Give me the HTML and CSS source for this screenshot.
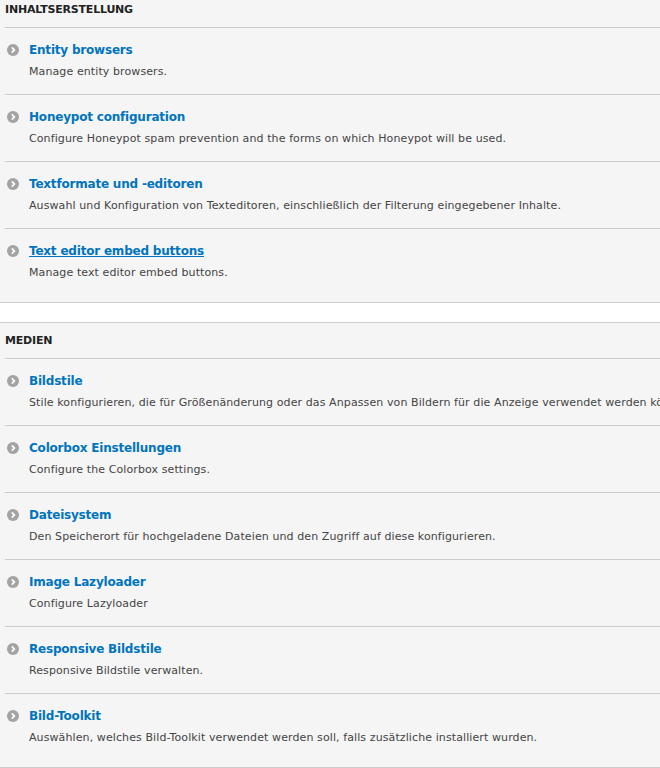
FILE: index.html
```html
<!DOCTYPE html>
<html lang="de">
<head>
<meta charset="utf-8">
<title>Konfiguration</title>
<link rel="stylesheet" href="styles.css">
</head>
<body>
<div class="page">
  <section class="panel first">
    <h3 class="panel-title">INHALTSERSTELLUNG</h3>
    <ul class="admin-list">
      <li>
        <div class="item-head"><svg class="icon" viewBox="0 0 12 12"><circle cx="6" cy="6" r="6" fill="#a3a3a3"/><path d="M4.8 3.4 7.3 6 4.8 8.6" fill="none" stroke="#fff" stroke-width="1.8"/></svg><a href="#" class="item-title">Entity browsers</a></div>
        <div class="desc">Manage entity browsers.</div>
      </li>
      <li>
        <div class="item-head"><svg class="icon" viewBox="0 0 12 12"><circle cx="6" cy="6" r="6" fill="#a3a3a3"/><path d="M4.8 3.4 7.3 6 4.8 8.6" fill="none" stroke="#fff" stroke-width="1.8"/></svg><a href="#" class="item-title">Honeypot configuration</a></div>
        <div class="desc">Configure Honeypot spam prevention and the forms on which Honeypot will be used.</div>
      </li>
      <li>
        <div class="item-head"><svg class="icon" viewBox="0 0 12 12"><circle cx="6" cy="6" r="6" fill="#a3a3a3"/><path d="M4.8 3.4 7.3 6 4.8 8.6" fill="none" stroke="#fff" stroke-width="1.8"/></svg><a href="#" class="item-title">Textformate und -editoren</a></div>
        <div class="desc">Auswahl und Konfiguration von Texteditoren, einschließlich der Filterung eingegebener Inhalte.</div>
      </li>
      <li>
        <div class="item-head"><svg class="icon" viewBox="0 0 12 12"><circle cx="6" cy="6" r="6" fill="#a3a3a3"/><path d="M4.8 3.4 7.3 6 4.8 8.6" fill="none" stroke="#fff" stroke-width="1.8"/></svg><a href="#" class="item-title hover">Text editor embed buttons</a></div>
        <div class="desc">Manage text editor embed buttons.</div>
      </li>
    </ul>
  </section>
  <section class="panel">
    <h3 class="panel-title">MEDIEN</h3>
    <ul class="admin-list">
      <li>
        <div class="item-head"><svg class="icon" viewBox="0 0 12 12"><circle cx="6" cy="6" r="6" fill="#a3a3a3"/><path d="M4.8 3.4 7.3 6 4.8 8.6" fill="none" stroke="#fff" stroke-width="1.8"/></svg><a href="#" class="item-title">Bildstile</a></div>
        <div class="desc">Stile konfigurieren, die für Größenänderung oder das Anpassen von Bildern für die Anzeige verwendet werden können.</div>
      </li>
      <li>
        <div class="item-head"><svg class="icon" viewBox="0 0 12 12"><circle cx="6" cy="6" r="6" fill="#a3a3a3"/><path d="M4.8 3.4 7.3 6 4.8 8.6" fill="none" stroke="#fff" stroke-width="1.8"/></svg><a href="#" class="item-title">Colorbox Einstellungen</a></div>
        <div class="desc">Configure the Colorbox settings.</div>
      </li>
      <li>
        <div class="item-head"><svg class="icon" viewBox="0 0 12 12"><circle cx="6" cy="6" r="6" fill="#a3a3a3"/><path d="M4.8 3.4 7.3 6 4.8 8.6" fill="none" stroke="#fff" stroke-width="1.8"/></svg><a href="#" class="item-title">Dateisystem</a></div>
        <div class="desc">Den Speicherort für hochgeladene Dateien und den Zugriff auf diese konfigurieren.</div>
      </li>
      <li>
        <div class="item-head"><svg class="icon" viewBox="0 0 12 12"><circle cx="6" cy="6" r="6" fill="#a3a3a3"/><path d="M4.8 3.4 7.3 6 4.8 8.6" fill="none" stroke="#fff" stroke-width="1.8"/></svg><a href="#" class="item-title">Image Lazyloader</a></div>
        <div class="desc">Configure Lazyloader</div>
      </li>
      <li>
        <div class="item-head"><svg class="icon" viewBox="0 0 12 12"><circle cx="6" cy="6" r="6" fill="#a3a3a3"/><path d="M4.8 3.4 7.3 6 4.8 8.6" fill="none" stroke="#fff" stroke-width="1.8"/></svg><a href="#" class="item-title">Responsive Bildstile</a></div>
        <div class="desc">Responsive Bildstile verwalten.</div>
      </li>
      <li>
        <div class="item-head"><svg class="icon" viewBox="0 0 12 12"><circle cx="6" cy="6" r="6" fill="#a3a3a3"/><path d="M4.8 3.4 7.3 6 4.8 8.6" fill="none" stroke="#fff" stroke-width="1.8"/></svg><a href="#" class="item-title">Bild-Toolkit</a></div>
        <div class="desc">Auswählen, welches Bild-Toolkit verwendet werden soll, falls zusätzliche installiert wurden.</div>
      </li>
    </ul>
  </section>
</div>
</body>
</html>
```

FILE: styles.css
```css
html, body {
  margin: 0;
  padding: 0;
  background: #ffffff;
  overflow: hidden;
}
body {
  font-family: "DejaVu Sans", Verdana, sans-serif;
  color: #333333;
}
.page {
  width: 900px;
}
.panel {
  background: #f5f5f5;
  border-top: 1px solid #cccccc;
  border-bottom: 1px solid #cccccc;
  padding: 0 0 7px 5px;
  margin: 0 0 19px 0;
}
.panel.first {
  margin-top: -9px;
}
.panel-title {
  margin: 0;
  padding: 10px 0;
  font-size: 11px;
  line-height: 15px;
  font-weight: bold;
  letter-spacing: -0.2px;
  color: #222222;
  border-bottom: 1px solid #cccccc;
}
.admin-list {
  list-style: none;
  margin: 0;
  padding: 0;
}
.admin-list li {
  padding: 13px 0 14px 0;
  border-bottom: 1px solid #cccccc;
}
.admin-list li:last-child {
  border-bottom: none;
}
.item-head {
  display: flex;
  align-items: center;
  height: 18px;
}
.icon {
  width: 12px;
  height: 12px;
  margin: 0 10px 0 2px;
  flex: none;
}
.item-title {
  font-size: 12px;
  line-height: 18px;
  font-weight: bold;
  letter-spacing: -0.2px;
  color: #0074bd;
  text-decoration: none;
}
.item-title.hover {
  text-decoration: underline;
}
.desc {
  margin: 5px 0 0 24px;
  font-size: 11px;
  line-height: 16px;
  letter-spacing: 0.1px;
  color: #444444;
  white-space: nowrap;
}
```
